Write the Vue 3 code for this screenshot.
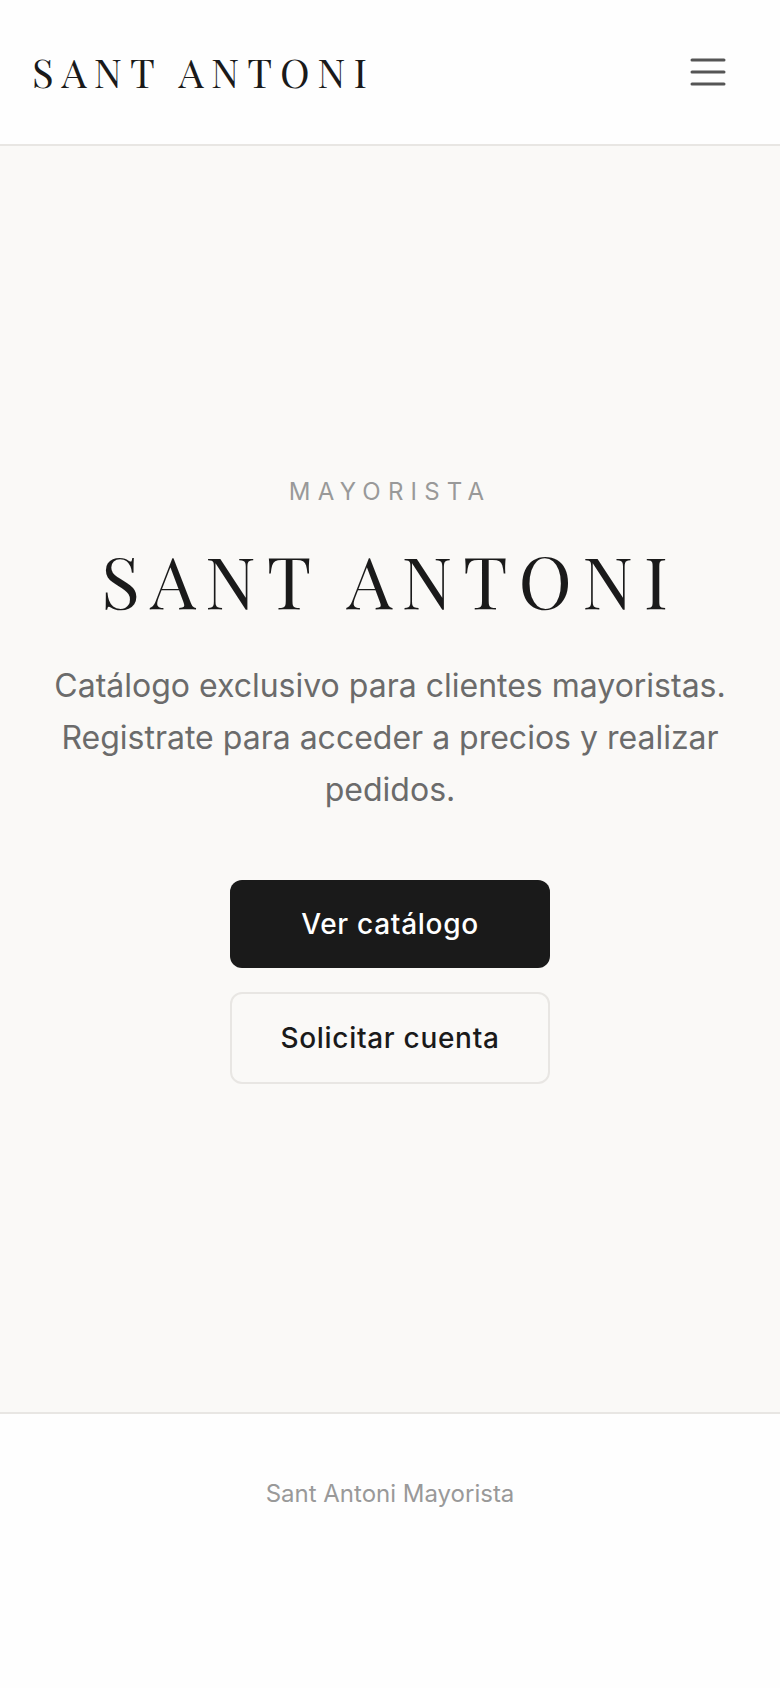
<template>
  <div class="page">
    <header>
      <a href="#" class="brand">SANT ANTONI</a>
      <button
        type="button"
        class="menu-button"
        aria-label="Menú"
        :aria-expanded="menuOpen"
        @click="menuOpen = !menuOpen"
      >
        <svg viewBox="0 0 24 24" fill="none" stroke="currentColor" stroke-width="1.5" stroke-linecap="round">
          <path d="M4 6h16M4 12h16M4 18h16" />
        </svg>
      </button>
    </header>

    <main>
      <p class="eyebrow">MAYORISTA</p>
      <h1>SANT ANTONI</h1>
      <p class="intro">
        Catálogo exclusivo para clientes mayoristas. Registrate para acceder a precios y realizar pedidos.
      </p>
      <div class="actions">
        <a
          v-for="action in actions"
          :key="action.label"
          :href="action.href"
          :class="['action', action.type]"
        >{{ action.label }}</a>
      </div>
    </main>

    <footer>
      <p>Sant Antoni Mayorista</p>
    </footer>
  </div>
</template>


<script setup>
import { ref } from 'vue';

const menuOpen = ref(false);

const actions = [
  { label: 'Ver catálogo', href: '#catalogo', type: 'primary' },
  { label: 'Solicitar cuenta', href: '#registro', type: 'secondary' }
];
</script>


<style>
body {
  margin: 0;
  background-color: #fefefe;
}
</style>

<style scoped>
.page {
  color: #1a1a1a;
  font-family: Inter, "Liberation Sans", sans-serif;
}

p,
h1 {
  margin: 0;
}

header {
  display: flex;
  align-items: center;
  justify-content: space-between;
  padding: 32px;
  border-bottom: 2px solid #e8e6e3;
}

.brand {
  color: inherit;
  font-family: "Playfair Display", "Liberation Serif", serif;
  font-size: 40px;
  line-height: 56px;
  letter-spacing: 0.2em;
  text-decoration: none;
}

.menu-button {
  display: flex;
  padding: 16px;
  border: none;
  background: none;
  color: #555;
  cursor: pointer;
}

.menu-button svg {
  width: 48px;
  height: 48px;
}

main {
  display: flex;
  flex-direction: column;
  align-items: center;
  justify-content: center;
  box-sizing: border-box;
  min-height: 75vh;
  padding: 32px;
  background-color: #faf9f7;
  text-align: center;
}

.eyebrow {
  margin-bottom: 24px;
  color: #999;
  font-size: 24px;
  line-height: 36px;
  letter-spacing: 0.3em;
}

h1 {
  margin-bottom: 36px;
  font-family: "Playfair Display", "Liberation Serif", serif;
  font-size: 72px;
  font-weight: 400;
  line-height: 90px;
  letter-spacing: 0.15em;
}

.intro {
  max-width: 680px;
  margin-bottom: 64px;
  color: #6b6b6b;
  font-size: 32px;
  line-height: 52px;
}

.actions {
  display: flex;
  flex-direction: column;
  gap: 24px;
  width: 320px;
}

.action {
  padding: 24px 48px;
  border-radius: 12px;
  font-size: 28px;
  font-weight: 500;
  line-height: 40px;
  letter-spacing: 0.025em;
  text-decoration: none;
  white-space: nowrap;
}

.primary {
  background-color: #1a1a1a;
  color: #fff;
}

.secondary {
  border: 2px solid #e8e6e3;
  color: #1a1a1a;
}

footer {
  padding: 64px 32px;
  border-top: 2px solid #e8e6e3;
  color: #999;
  font-size: 24px;
  line-height: 32px;
  text-align: center;
}
</style>
